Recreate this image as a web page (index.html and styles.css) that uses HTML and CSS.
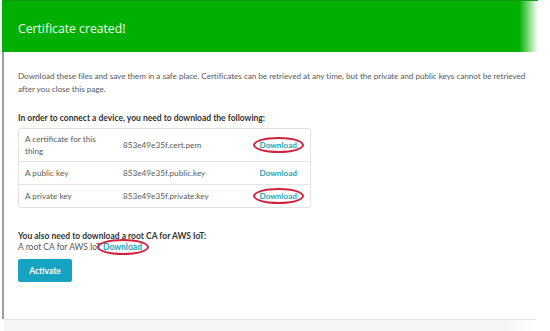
FILE: index.html
```html
<!DOCTYPE html>
<html>
<head>
    <title>Certificate created</title>
    <link rel="stylesheet" href="styles.css">
</head>
<body>
    <div class="banner">
        <h1>Certificate created!</h1>
    </div>
    <div class="content">
        <p class="intro">Download these files and save them in a safe place. Certificates can be retrieved at any time, but the private and public keys cannot be retrieved after you close this page.</p>
        <h2>In order to connect a device, you need to download the following:</h2>
        <div class="files">
            <div class="file-row tall">
                <span class="file-label">A certificate for this thing</span>
                <span class="file-name">853e49e35f.cert.pem</span>
                <a class="download marked">Download</a>
            </div>
            <div class="file-row">
                <span class="file-label">A public key</span>
                <span class="file-name">853e49e35f.public.key</span>
                <a class="download">Download</a>
            </div>
            <div class="file-row">
                <span class="file-label">A private key</span>
                <span class="file-name">853e49e35f.private.key</span>
                <a class="download marked">Download</a>
            </div>
        </div>
        <h2 class="root-title">You also need to download a root CA for AWS IoT:</h2>
        <p class="root-line">A root CA for AWS IoT <a class="download marked">Download</a></p>
        <button class="activate">Activate</button>
    </div>
    <div class="footer-band"></div>
</body>
</html>
```

FILE: styles.css
```css
body {
    margin: 0;
    background: #fff;
    font-family: Lato, "Open Sans", Arial, sans-serif;
    color: #555;
    width: 550px;
    height: 331px;
    overflow: hidden;
    display: flex;
    flex-direction: column;
}
.banner {
    margin-left: 2px;
    width: 536px;
    height: 52px;
    border-top: 1px solid #159a15;
    background: linear-gradient(90deg, #00b000 0, #00b000 96.5%, rgba(0,176,0,0) 100%);
    display: flex;
    align-items: center;
    padding: 4px 0 0 16px;
    box-sizing: border-box;
}
.banner h1 {
    margin: 0;
    font-family: "Open Sans", Arial, sans-serif;
    font-size: 12.2px;
    font-weight: normal;
    color: #f2fff2;
}
.content {
    flex: 1;
    margin-left: 2px;
    border-left: 2px solid #9c9c9c;
    padding: 18px 16px 0 14px;
}
.intro {
    margin: 0;
    font-size: 8.2px;
    line-height: 13px;
    letter-spacing: -0.05px;
    color: #5a5a5a;
    width: 516px;
}
h2 {
    margin: 16px 0 0 0;
    font-size: 8.5px;
    line-height: 12px;
    font-weight: bold;
    color: #333;
}
.files {
    margin-top: 4px;
    width: 291px;
    border: 1px solid #e2e2e2;
    border-radius: 3px;
}
.file-row {
    display: flex;
    align-items: center;
    height: 22px;
    padding: 0 13px 0 6px;
    font-size: 8.2px;
    color: #5a5a5a;
    border-top: 1px solid #e6e6e6;
}
.file-row:first-child {
    border-top: none;
}
.file-row.tall {
    height: 32px;
}
.file-label {
    width: 80px;
    margin-right: 18px;
    line-height: 12px;
}
.file-name {
    flex: 1;
}
.download {
    position: relative;
    font-weight: bold;
    color: #1aa5b8;
}
.download.marked::after {
    content: "";
    position: absolute;
    left: -6px;
    right: -7px;
    top: -3px;
    bottom: -3px;
    border: 2px solid #d3223f;
    border-radius: 50%;
}
.root-title {
    margin-top: 22px;
}
.root-line {
    margin: 0;
    font-size: 8.5px;
    line-height: 11px;
    color: #5a5a5a;
}
.activate {
    margin-top: 6px;
    width: 54px;
    height: 23px;
    border: none;
    border-radius: 2px;
    background: #16a3c2;
    color: #fff;
    font-family: Lato, "Open Sans", Arial, sans-serif;
    font-size: 8.5px;
    font-weight: bold;
    padding: 0;
}
.footer-band {
    margin-left: 4px;
    width: 532px;
    height: 11px;
    border-top: 1px solid #e4e4e4;
    background: linear-gradient(90deg, #f5f5f5 94%, rgba(245,245,245,0) 100%);
}
```
